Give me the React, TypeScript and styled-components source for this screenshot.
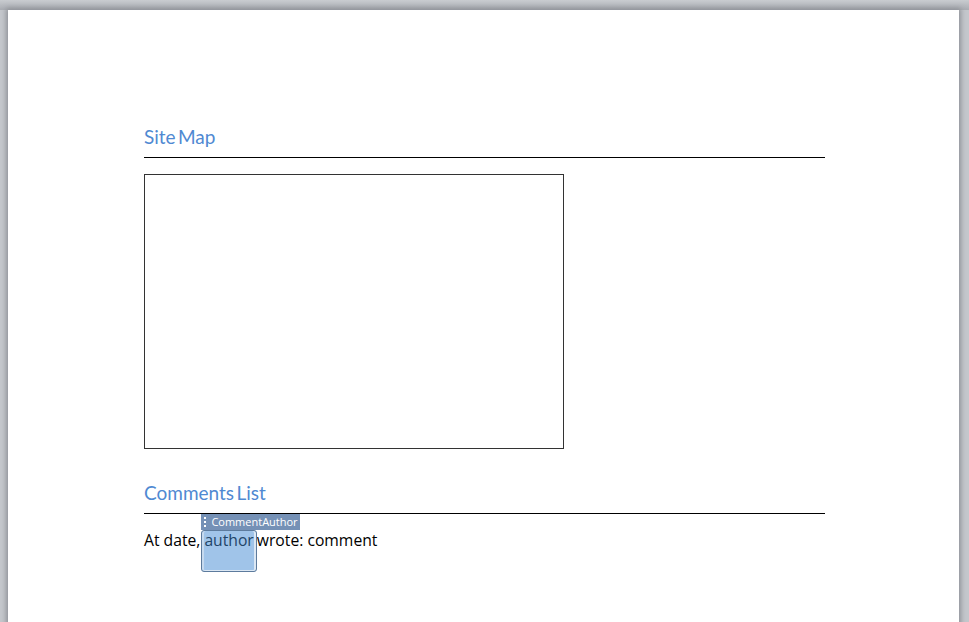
import React from "react";
import styled, { createGlobalStyle } from "styled-components";

const Global = createGlobalStyle`
  html, body { margin: 0; padding: 0; height: 100%; overflow: hidden; background: #c4c7cc; }
  #root { height: 100%; }
`;

const Workspace = styled.div`
  width: 969px;
  height: 622px;
  box-sizing: border-box;
  padding: 10px 10px 0 8px;
  overflow: hidden;
  background: linear-gradient(to bottom, #c9ccd0 0, #a9acb2 10px, #c4c7cc 10px);
`;

const Sheet = styled.div`
  width: 951px;
  height: 640px;
  box-sizing: border-box;
  padding: 117px 134px 0 136px;
  background: #fff;
  box-shadow: 0 0 5px 2px #8f9298;
`;

const SectionTitle = styled.h2`
  margin: 0;
  height: 31px;
  box-sizing: border-box;
  border-bottom: 1px solid #000;
  font: 400 19px/20px Lato, "Liberation Sans", sans-serif;
  word-spacing: -2.5px;
  color: #4f89d2;
`;

const MapFrame = styled.div`
  width: 420px;
  height: 275px;
  box-sizing: border-box;
  margin: 16px 0 34px;
  border: 1px solid #333;
`;

const CommentLine = styled.p`
  margin: 16px 0 0;
  font: 400 15.7px/20px "Open Sans", "Noto Sans", sans-serif;
  color: #000;
`;

const ContentControl = styled.span`
  position: relative;
  display: inline-block;
  margin: 0 3px 0 4px;
  color: #1f4468;
`;

const ControlBox = styled.span`
  position: absolute;
  left: -3px;
  top: 0;
  width: 56px;
  height: 42px;
  box-sizing: border-box;
  z-index: 0;
  border: 1px solid #5d7b9d;
  border-radius: 3px;
  background: #a0c4e9;
  box-shadow: inset -2px 0 0 #dce8f4, inset 2px 0 0 #c6daef, inset 0 -1px 0 #dce8f4;
`;

const ControlTag = styled.span`
  position: absolute;
  left: -3px;
  top: -16px;
  width: 99px;
  height: 16px;
  display: flex;
  align-items: center;
  gap: 5px;
  padding-left: 3px;
  box-sizing: border-box;
  background: #7591b6;
  color: #fff;
  font: 400 11px/16px "Open Sans", "Noto Sans", sans-serif;
  white-space: nowrap;
`;

const Grip = styled.span`
  width: 2px;
  height: 10px;
  flex: none;
  background: repeating-linear-gradient(to bottom, #fff 0 2px, transparent 2px 4px);
`;

const ControlText = styled.span`
  position: relative;
  z-index: 1;
`;

export default function App() {
  return (
    <Workspace>
      <Global />
      <Sheet>
        <SectionTitle>Site Map</SectionTitle>
        <MapFrame />
        <SectionTitle>Comments List</SectionTitle>
        <CommentLine>
          At date,
          <ContentControl>
            <ControlBox />
            <ControlTag>
              <Grip />
              CommentAuthor
            </ControlTag>
            <ControlText>author</ControlText>
          </ContentControl>
          wrote: comment
        </CommentLine>
      </Sheet>
    </Workspace>
  );
}
